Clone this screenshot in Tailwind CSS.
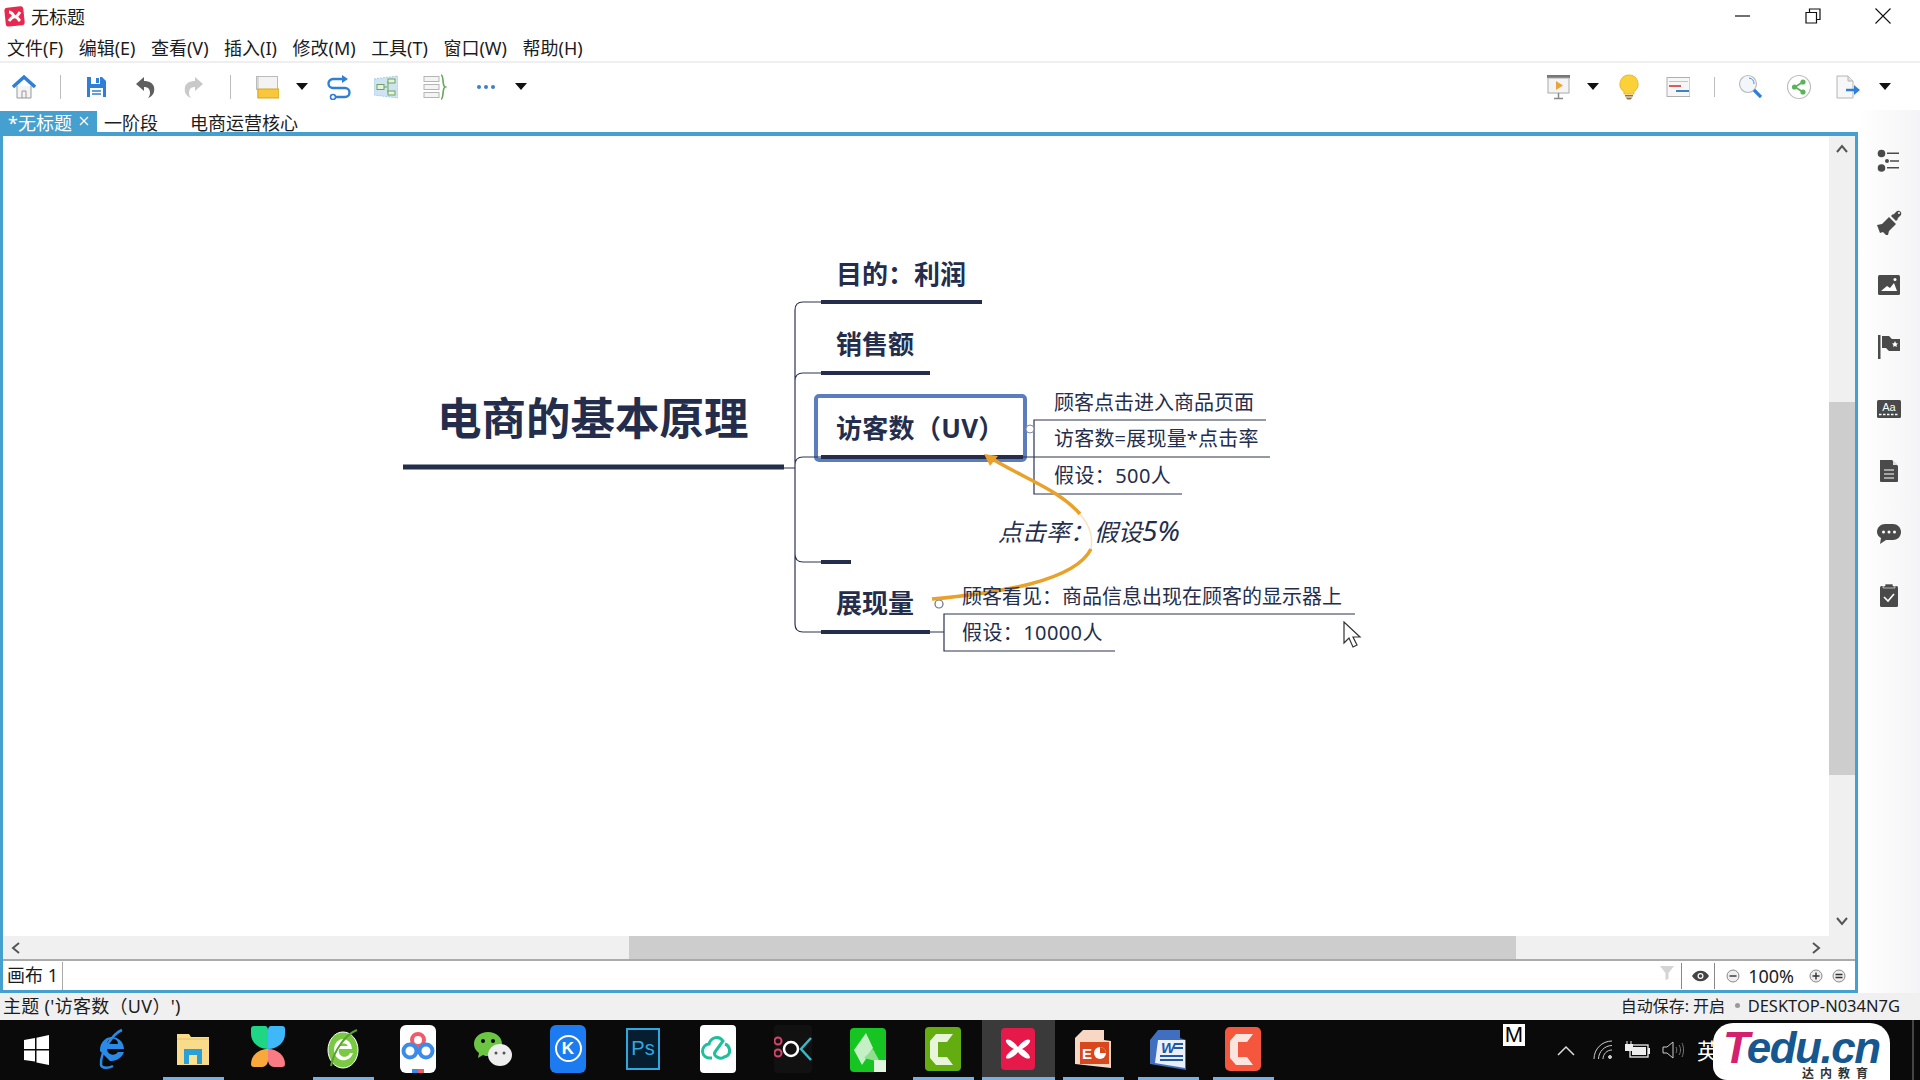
<!DOCTYPE html>
<html lang="zh-CN">

<head>
    <meta charset="UTF-8">
    <script src="https://cdn.jsdelivr.net/npm/@tailwindcss/browser@4"></script>
    <title>无标题</title>
</head>

<body class="m-0 overflow-hidden bg-white">
    <div class="w-[1920px] h-[1080px] flex flex-col overflow-hidden text-[18px] text-[#1c1c1c] font-['Noto_Sans','Noto_Sans_CJK_SC',sans-serif]">

        <!-- title bar -->
        <div class="h-[35px] flex items-start shrink-0">
            <svg class="mt-[6px] ml-[4px]" width="21" height="21" viewBox="0 0 21 21"><rect x="1" y="1" width="19" height="19" rx="3" fill="#e8294f" transform="rotate(-6 10 10)"/><path d="M5 6c3 0 4 3 5.500 4.500S14 9 16 6M5 15c2-3 3-4 5.500-4.500S14 13 16 15" fill="none" stroke="#fff" stroke-width="3"/></svg>
            <span class="ml-[6px] mt-[4px] leading-[26px]">无标题</span>
            <div class="ml-auto flex items-center h-[32px]">
                <svg class="mr-[54px]" width="16" height="16" viewBox="0 0 16 16"><path d="M0 8h15" stroke="#111" stroke-width="1.200"/></svg>
                <svg class="mr-[54px]" width="16" height="16" viewBox="0 0 16 16"><path d="M1 4.500h10.500V15H1zM4.500 4.500V1H15v10.500h-3.500" fill="none" stroke="#111" stroke-width="1.200"/></svg>
                <svg class="mr-[29px]" width="16" height="16" viewBox="0 0 16 16"><path d="M.5.5l15 15M15.500.5l-15 15" stroke="#111" stroke-width="1.100"/></svg>
            </div>
        </div>

        <!-- menu -->
        <div class="h-[26px] flex items-center shrink-0 pl-[7px] gap-[15.500px] leading-[26px]">
            <span>文件(F)</span><span>编辑(E)</span><span>查看(V)</span><span>插入(I)</span><span>修改(M)</span><span>工具(T)</span><span>窗口(W)</span><span>帮助(H)</span>
        </div>
        <div class="h-[2px] bg-[#efefef] shrink-0"></div>

        <!-- toolbar -->
        <div class="h-[47px] flex items-center shrink-0 pl-[12px] pr-[29px]">
            <svg width="24" height="26" viewBox="0 0 24 26"><path d="M5 12v12h14V12" fill="#f4f4f4" stroke="#999"/><path d="M10 24v-7h4v7" fill="none" stroke="#999"/><path d="M1 13L12 3l11 10" fill="none" stroke="#2f7fd6" stroke-width="3.500"/></svg>
            <div class="ml-[24px] w-px h-[24px] bg-[#bdbdbd]"></div>
            <svg class="ml-[23px]" width="24" height="26" viewBox="0 0 24 26"><path d="M3 3h15l4 4v16H3z" fill="#2f7fd6"/><rect x="7" y="3" width="9" height="7" fill="#fff"/><rect x="12" y="4" width="3" height="5" fill="#2f7fd6"/><rect x="6" y="14" width="13" height="9" fill="#fff"/><path d="M8 17h9M8 20h9" stroke="#2f7fd6" stroke-width="1.500"/></svg>
            <svg class="ml-[25px]" width="24" height="26" viewBox="0 0 24 26"><path d="M11 3L3 10l8 7v-4c4 0 6 2 6 6 0 2-1 4-2 5 5-2 7-6 6-11-1-4-5-6-10-6z" fill="#5f5f5f"/></svg>
            <svg class="ml-[25px]" width="24" height="26" viewBox="0 0 24 26"><path d="M13 3l8 7-8 7v-4c-4 0-6 2-6 6 0 2 1 4 2 5-5-2-7-6-6-11 1-4 5-6 10-6z" fill="#c9c9c9"/></svg>
            <div class="ml-[24px] w-px h-[24px] bg-[#bdbdbd]"></div>
            <svg class="ml-[24px]" width="24" height="26" viewBox="0 0 24 26"><rect x="1.500" y="2.500" width="21" height="13" fill="#f3f3f3" stroke="#bbb"/><path d="M3 2.500V24" stroke="#bbb"/><rect x="3" y="15" width="21" height="9" fill="#f8c83a" stroke="#d9a520"/></svg>
            <div class="ml-[17px] w-0 h-0 border-x-[6px] border-x-transparent border-t-[7px] border-t-[#111]"></div>
            <svg class="ml-[19px]" width="24" height="26" viewBox="0 0 24 26"><path d="M17 5H6a4.500 4.500 0 0 0 0 9h12a4.500 4.500 0 0 1 0 9H8" fill="none" stroke="#2f7fd6" stroke-width="2.400"/><path d="M15 1l6 4-6 4z" fill="#2f7fd6"/><circle cx="6" cy="23" r="2.500" fill="#fff" stroke="#2f7fd6" stroke-width="1.600"/></svg>
            <svg class="ml-[23px]" width="24" height="26" viewBox="0 0 24 26"><path d="M0 5l24-3v22L0 21z" fill="#cfe3f3" stroke="#a9cbe4" stroke-dasharray="2 1"/><path d="M10 13h3M14 7v12" stroke="#6da35f"/><rect x="3" y="10.500" width="7" height="5" fill="#e6f2dc" stroke="#6da35f"/><rect x="14" y="5" width="7" height="4" fill="#e6f2dc" stroke="#6da35f"/><rect x="14" y="17" width="7" height="4" fill="#e6f2dc" stroke="#6da35f"/></svg>
            <svg class="ml-[25px]" width="24" height="26" viewBox="0 0 24 26"><rect x="1" y="2.500" width="15" height="5" fill="#f4f4f4" stroke="#b5b5b5"/><rect x="1" y="10.500" width="15" height="5" fill="#f4f4f4" stroke="#b5b5b5"/><rect x="1" y="18.500" width="15" height="5" fill="#f4f4f4" stroke="#b5b5b5"/><path d="M18 1c3 0 1 11 4 12-3 1-1 12-4 12" fill="none" stroke="#68a45c" stroke-width="1.600"/></svg>
            <svg class="ml-[27px]" width="24" height="26" viewBox="0 0 24 26"><circle cx="5" cy="13" r="2" fill="#3f7fc4"/><circle cx="12" cy="13" r="2" fill="#3f7fc4"/><circle cx="19" cy="13" r="2" fill="#3f7fc4"/></svg>
            <div class="ml-[17px] w-0 h-0 border-x-[6px] border-x-transparent border-t-[7px] border-t-[#111]"></div>

            <svg class="ml-auto" width="24" height="26" viewBox="0 0 24 26"><rect x="1" y="1" width="23" height="3" fill="#777"/><rect x="2" y="4" width="21" height="15" fill="#f4f4f4" stroke="#aaa"/><path d="M10 7l7 4.500-7 4.500z" fill="#eda33a"/><path d="M12.500 19v5M8 24.500h9" stroke="#888" stroke-width="1.500"/></svg>
            <div class="ml-[17px] w-0 h-0 border-x-[6px] border-x-transparent border-t-[7px] border-t-[#111]"></div>
            <svg class="ml-[18px]" width="24" height="26" viewBox="0 0 24 26"><path d="M12 1a9 9 0 0 0-5 16.500V20h10v-2.500A9 9 0 0 0 12 1z" fill="#fbd13a" stroke="#eeb52e"/><path d="M8 21h8v1.500H8zM8.500 23.500h7L13.500 25.500h-3z" fill="#8c7440"/></svg>
            <svg class="ml-[25px]" width="24" height="26" viewBox="0 0 24 26"><rect x="1" y="3.500" width="23" height="19" fill="#f6f6f6" stroke="#b0b0b0"/><path d="M3 7.500h19" stroke="#c4c4c4"/><path d="M3 12h12" stroke="#dc5a5a" stroke-width="2"/><path d="M10 17h13" stroke="#3e82c4" stroke-width="2"/></svg>
            <div class="ml-[24px] w-px h-[20px] bg-[#bdbdbd]"></div>
            <svg class="ml-[23px]" width="24" height="26" viewBox="0 0 24 26"><circle cx="10" cy="10" r="8.500" fill="#f2f6fb" stroke="#bbb" stroke-width="1.200"/><path d="M11 4a6 6 0 0 1 5 6" fill="none" stroke="#4a90d9"/><path d="M16 16l7 7" stroke="#2f7fd6" stroke-width="3.200"/></svg>
            <svg class="ml-[25px]" width="24" height="26" viewBox="0 0 24 26"><circle cx="12" cy="13" r="11.500" fill="#fff" stroke="#bdbdbd" stroke-width="1.200"/><path d="M16 8l-8 5 8 5" fill="none" stroke="#5cb35c" stroke-width="1.800"/><circle cx="16" cy="8" r="2.600" fill="#5cb35c"/><circle cx="7.500" cy="13" r="2.600" fill="#5cb35c"/><circle cx="16" cy="18" r="2.600" fill="#5cb35c"/></svg>
            <svg class="ml-[25px]" width="24" height="26" viewBox="0 0 24 26"><path d="M1 2h11l5 5v17H1z" fill="#f7f7f7" stroke="#b5b5b5"/><path d="M12 2v5h5" fill="#e4e4e4" stroke="#b5b5b5"/><path d="M10 16h9" stroke="#2f7fd6" stroke-width="2.500"/><path d="M18 11l6 5-6 5z" fill="#2f7fd6"/></svg>
            <div class="ml-[19px] w-0 h-0 border-x-[6px] border-x-transparent border-t-[7px] border-t-[#111]"></div>
        </div>

        <!-- work area -->
        <div class="h-[883px] flex shrink-0">
            <div class="w-[1858px] flex flex-col">
                <div class="h-[22px] flex items-end shrink-0 leading-[21px]">
                    <div class="w-[97px] h-[21px] pt-[2px] bg-[#45a0d0] text-white pl-[8px] flex items-start">*无标题<svg class="ml-[7px] mt-[3px]" width="10" height="10" viewBox="0 0 10 10"><path d="M1 1l8 8M9 1l-8 8" stroke="#fff" stroke-width="1.300"/></svg></div>
                    <span class="ml-[7px] h-[21px] pt-[2px]">一阶段</span>
                    <span class="ml-[32px] h-[21px] pt-[2px]">电商运营核心</span>
                </div>
                <div class="flex-1 border-[3px] border-t-[4px] border-[#45a0d0] flex flex-col min-h-0 relative">
                    <div class="flex-1 flex min-h-0">
                        <div class="flex-1 relative overflow-hidden bg-white">
                            <!-- the mind map, in page coordinates -->
                            <div class="absolute left-[-3px] top-[-135px] w-[1920px] h-[1080px] text-[#242e4c]">
                                <div class="absolute left-[814px] top-[393px] w-[213px] h-[68px] border-[4px] border-[#5b7dbd] rounded-[5px]"></div>
                                <svg class="absolute left-0 top-0" width="1920" height="1080" fill="none">
                                    <path d="M403 466H784" stroke="#242e4c" stroke-width="5"/>
                                    <path d="M784 467H795M821 301H803Q795 301 795 309V623Q795 631 803 631H821M821 372H803Q795 372 795 380M821 456H803Q795 456 795 464M795 553Q795 561 803 561H821" stroke="#2b3350" stroke-width="1.200"/>
                                    <path d="M821 301H982M821 372H930M821 456H1023M821 561H851M821 631H930" stroke="#242e4c" stroke-width="4"/>
                                    <path d="M1266 419H1034V493H1182M1023 456H1270M930 631H944M1355 613H944V650H1115" stroke="#2b3350" stroke-width="1.200"/>
                                    <circle cx="1030" cy="428" r="4" fill="#fff" stroke="#7d8aa5"/>
                                    <circle cx="939" cy="603" r="4" fill="#fff" stroke="#66708a" stroke-width="1.200"/>
                                    <path d="M932 598C1000 592 1075 580 1091 548M1080 513C1060 490 1030 480 994 459" stroke="#e9a12a" stroke-width="3.500"/>
                                    <path d="M1091 548C1093 535 1090 525 1080 513" stroke="#f8e3bf" stroke-width="1.500"/>
                                    <path d="M984 453L998 455L990 465Z" fill="#e9a12a"/>
                                </svg>
                                <div class="absolute left-[437px] top-[387px] text-[44.500px] leading-[60px] font-bold whitespace-nowrap">电商的基本原理</div>
                                <div class="absolute left-[836px] top-[255px] text-[26px] leading-[36px] font-bold whitespace-nowrap">目的：利润</div>
                                <div class="absolute left-[836px] top-[325px] text-[26px] leading-[36px] font-bold whitespace-nowrap">销售额</div>
                                <div class="absolute left-[836px] top-[409px] text-[26px] leading-[36px] font-bold tracking-[0.3px] whitespace-nowrap">访客数（UV）</div>
                                <div class="absolute left-[836px] top-[584px] text-[26px] leading-[36px] font-bold whitespace-nowrap">展现量</div>
                                <div class="absolute left-[1054px] top-[388px] text-[20px] leading-[28px] whitespace-nowrap">顾客点击进入商品页面</div>
                                <div class="absolute left-[1054px] top-[424px] text-[20px] leading-[28px] tracking-[0.2px] whitespace-nowrap">访客数=展现量*点击率</div>
                                <div class="absolute left-[1054px] top-[461px] text-[20px] leading-[28px] tracking-[0.4px] whitespace-nowrap">假设：500人</div>
                                <div class="absolute left-[962px] top-[582px] text-[20px] leading-[28px] whitespace-nowrap">顾客看见：商品信息出现在顾客的显示器上</div>
                                <div class="absolute left-[962px] top-[618px] text-[20px] leading-[28px] tracking-[0.4px] whitespace-nowrap">假设：10000人</div>
                                <div class="absolute left-[998px] top-[512px] text-[24px] leading-[34px] italic whitespace-nowrap">点击率：假设<span class="text-[28px]">5%</span></div>
                                <svg class="absolute left-[1342px] top-[620px]" width="22" height="28" viewBox="0 0 22 28"><path d="M2 1v21l5-5 4 9 4-2-4-8h7z" fill="#fff" stroke="#333" stroke-width="1.200"/></svg>
                            </div>
                        </div>
                        <!-- vertical scrollbar -->
                        <div class="w-[26px] bg-[#f0f0f0] relative shrink-0">
                            <svg class="absolute left-[7px] top-[8px]" width="12" height="10" viewBox="0 0 12 10"><path d="M1 8l5-6 5 6" fill="none" stroke="#555" stroke-width="2"/></svg>
                            <div class="absolute left-0 top-[266px] w-full h-[373px] bg-[#cdcdcd]"></div>
                            <svg class="absolute left-[7px] bottom-[10px]" width="12" height="10" viewBox="0 0 12 10"><path d="M1 2l5 6 5-6" fill="none" stroke="#555" stroke-width="2"/></svg>
                        </div>
                    </div>
                    <!-- horizontal scrollbar -->
                    <div class="h-[23px] bg-[#f0f0f0] flex items-center relative shrink-0">
                        <svg class="ml-[8px]" width="10" height="12" viewBox="0 0 10 12"><path d="M8 1L2 6l6 5" fill="none" stroke="#555" stroke-width="2"/></svg>
                        <div class="absolute left-[626px] w-[887px] h-full bg-[#cdcdcd]"></div>
                        <svg class="absolute right-[34px]" width="10" height="12" viewBox="0 0 10 12"><path d="M2 1l6 5-6 5" fill="none" stroke="#555" stroke-width="2"/></svg>
                    </div>
                    <!-- sheet bar -->
                    <div class="h-[31px] border-t-2 border-[#aaaaaa] flex items-center shrink-0">
                        <span class="pl-[4px] pb-[2px] w-[60px] leading-[26px] border-r border-[#aaaaaa] whitespace-nowrap">画布 1</span>
                        <svg class="ml-auto mb-[6px]" width="16" height="16" viewBox="0 0 16 16"><path d="M1 1h14L9.500 8v6l-3 1V8z" fill="#d4d4d4"/></svg>
                        <div class="ml-[6px] w-px h-[26px] bg-[#888]"></div>
                        <svg class="ml-[10px]" width="17" height="12" viewBox="0 0 17 12"><path d="M0 6c4-7 13-7 17 0-4 7-13 7-17 0z" fill="#444"/><circle cx="8.500" cy="6" r="3" fill="#fff"/><circle cx="8.500" cy="6" r="1.800" fill="#444"/></svg>
                        <div class="ml-[5px] w-px h-[26px] bg-[#888]"></div>
                        <svg class="ml-[11px]" width="14" height="14" viewBox="0 0 14 14"><circle cx="7" cy="7" r="6" fill="#eee" stroke="#888"/><path d="M3.500 7h7" stroke="#333" stroke-width="1.400"/></svg>
                        <span class="ml-[8px] leading-[28px] text-[#222]">100%</span>
                        <svg class="ml-[15px]" width="14" height="14" viewBox="0 0 14 14"><circle cx="7" cy="7" r="6" fill="#eee" stroke="#888"/><path d="M3.500 7h7M7 3.500v7" stroke="#333" stroke-width="1.400"/></svg>
                        <svg class="ml-[9px] mr-[9px]" width="14" height="14" viewBox="0 0 14 14"><circle cx="7" cy="7" r="6" fill="#eee" stroke="#888"/><path d="M3.500 5.500h7M3.500 8.500h7" stroke="#333" stroke-width="1.400"/></svg>
                    </div>
                </div>
            </div>

            <!-- right panel -->
            <div class="w-[62px] pt-[20px] flex flex-col items-center bg-gradient-to-r from-white to-[#f4f4f6]">
                <div class="h-[62px] flex items-center"><svg width="24" height="24" viewBox="0 0 24 24" fill="#4a4a4a"><circle cx="4.500" cy="4.500" r="3.800"/><circle cx="4.500" cy="19" r="3.800"/><circle cx="10" cy="12" r="2"/><path d="M10 3.500h12v1.500H10zM13 11.200h9v1.500h-9zM10 18h12v1.500H10z"/></svg></div>
                <div class="h-[62px] flex items-center"><svg width="26" height="26" viewBox="0 0 26 26" fill="#4a4a4a"><path d="M1 15l5-1 7-7 7 7-7 7-1 4-2 0-3-3-3 1z"/><path d="M15 6l2-2 5 5-2 2z"/><path d="M17 5l4-4a3 3 0 0 1 4 4l-4 4z"/><circle cx="23" cy="3" r="1" fill="#fff"/></svg></div>
                <div class="h-[62px] flex items-center"><svg width="24" height="24" viewBox="0 0 24 24"><rect x="1" y="2" width="22" height="20" rx="1.500" fill="#4a4a4a"/><path d="M4 18l6-5 3 2 4-5 3 8z" fill="#fff"/><circle cx="18" cy="6.500" r="1.500" fill="#fff"/></svg></div>
                <div class="h-[62px] flex items-center"><svg width="24" height="24" viewBox="0 0 24 24" fill="#4a4a4a"><rect x="1" y="0" width="2.500" height="24"/><path d="M5 1h7l3 3h8v12H12l-3-3H5z"/><path d="M18 6l1 2.200 2 .2-1.500 1.500.4 2.100-1.900-1-1.900 1 .4-2.100L15 8.400l2-.2z" fill="#fff"/></svg></div>
                <div class="h-[62px] flex items-center"><svg width="24" height="18" viewBox="0 0 24 18"><rect width="24" height="18" rx="1.500" fill="#4a4a4a"/><text x="12" y="11" text-anchor="middle" font-family="Liberation Sans" font-size="11" fill="#fff">Aa</text><path d="M2 14.500h20" stroke="#fff" stroke-width="1.300" stroke-dasharray="2.500 1.500"/></svg></div>
                <div class="h-[62px] flex items-center"><svg width="24" height="24" viewBox="0 0 24 24"><path d="M3 1h12l6 6v15a1 1 0 0 1-1 1H4a1 1 0 0 1-1-1z" fill="#4a4a4a"/><path d="M16 1l5 5h-5z" fill="#ddd"/><path d="M7 11h10M7 15h10M7 19h10" stroke="#fff" stroke-width="1.200"/></svg></div>
                <div class="h-[62px] flex items-center"><svg width="24" height="24" viewBox="0 0 24 24"><path d="M8 3h8c4 0 8 3 8 8s-4 8-8 8H9l-6 4 1-6c-2-1-4-3-4-6 0-5 4-8 8-8z" fill="#4a4a4a"/><circle cx="6.500" cy="11" r="1.500" fill="#fff"/><circle cx="12" cy="11" r="1.500" fill="#fff"/><circle cx="17.500" cy="11" r="1.500" fill="#fff"/></svg></div>
                <div class="h-[62px] flex items-center"><svg width="24" height="24" viewBox="0 0 24 24"><rect x="3" y="3" width="18" height="21" rx="1.500" fill="#4a4a4a"/><path d="M8 3V1h8v2h2v2H6V3z" fill="#4a4a4a" stroke="#fff" stroke-width=".6"/><path d="M7 14l4 4 6-7" fill="none" stroke="#fff" stroke-width="1.600"/></svg></div>
            </div>
        </div>

        <!-- status bar -->
        <div class="h-[27px] bg-[#f0f0f0] flex items-center shrink-0 pl-[3px] pr-[20px] pb-[2px] leading-[24px]">
            <span class="tracking-[0.3px]">主题 ('访客数（UV）')</span>
            <span class="ml-auto text-[16px]">自动保存: 开启</span>
            <span class="ml-[10px] w-[5px] h-[5px] rounded-full bg-[#999]"></span>
            <span class="ml-[7.500px] text-[16.500px]">DESKTOP-N034N7G</span>
        </div>

        <!-- taskbar -->
        <div class="h-[60px] bg-[#0a0a0a] flex shrink-0 relative">
            <div class="w-[72px] flex items-center justify-center">
                <svg width="25" height="32" viewBox="0 0 25 32" fill="#fff"><path d="M0 6l11-2v11H0zM12.500 3.800L25 1v14H12.500zM0 16.500h11v11L0 26zM12.500 16.500H25V31l-12.500-2.500z"/></svg>
            </div>
            <div class="w-[83.500px] pr-[4px] flex items-center justify-center">
                <svg width="32" height="46" viewBox="0 0 32 46"><path d="M4 24a12 13 0 1 1 24-2H11a6 6 0 0 0 11 3h6c-3 8-10 9-14 9" fill="#2b8ae6"/><path d="M11 17h11a5 5 0 0 0-11 0z" fill="#0a0a0a"/><path d="M26 3C18 6 4 24 5 38c1 4 8 3 12 1" fill="none" stroke="#2b8ae6" stroke-width="2.500"/></svg>
            </div>

            <!-- pinned apps, 75px apart -->
            <div class="w-[75px] flex flex-col items-center">
                <div class="flex-1 flex items-center"><svg width="34" height="36" viewBox="0 0 34 36"><path d="M1 3h12l2 3h18v28H1z" fill="#f9dc8b"/><path d="M1 8h32" stroke="#e8be5f"/><path d="M8 33V18h18v15h-5v-9h-8v9z" fill="#2a9fd8"/><rect x="13" y="24" width="8" height="9" fill="#fbe28f"/></svg></div>
                <div class="w-[61px] h-[3px] bg-[#7ab0e0]"></div>
            </div>
            <div class="w-[75px] flex items-center justify-center pb-[3px]">
                <svg width="36" height="48" viewBox="0 0 36 48"><path d="M1 4a3 3 0 0 1 3-3h11c2 0 3 2 3 4v19C8 24 1 17 1 9z" fill="#1fd685"/><path d="M35 4a3 3 0 0 0-3-3H21c-2 0-3 2-3 4v19c10 0 17-7 17-15z" fill="#3fb8fa"/><path d="M1 39a3 3 0 0 0 3 3h8c4 0 6-4 6-7V24C8 24 1 31 1 39z" fill="#f9a93c"/><path d="M35 39a3 3 0 0 1-3 3h-8c-4 0-6-4-6-7V24c10 0 17 7 17 15z" fill="#fb7b85"/></svg>
            </div>
            <div class="w-[75px] flex flex-col items-center">
                <div class="flex-1 flex items-center"><svg width="34" height="46" viewBox="0 0 34 46"><ellipse cx="17" cy="24" rx="15" ry="18" fill="#7ac943" stroke="#fff"/><path d="M8 23a9 10 0 1 1 18 0H13a5 5 0 0 0 11 4h3c-2 6-7 8-12 7-5-2-7-6-7-11z" fill="#fff"/><path d="M13 20h9a5 5 0 0 0-9 0z" fill="#7ac943"/><path d="M31 4C20 8 8 24 5 40" fill="none" stroke="#5aa02c" stroke-width="2"/></svg></div>
                <div class="w-[61px] h-[3px] bg-[#7ab0e0]"></div>
            </div>
            <div class="w-[75px] flex items-center justify-center pb-[3px]">
                <svg width="36" height="48" viewBox="0 0 36 48"><rect width="36" height="48" rx="6" fill="#fff"/><circle cx="18" cy="15" r="6" fill="none" stroke="#f25a6a" stroke-width="4"/><circle cx="10" cy="26" r="6.500" fill="none" stroke="#3b8be8" stroke-width="4"/><circle cx="26" cy="26" r="6.500" fill="none" stroke="#3b8be8" stroke-width="4"/><rect x="12" y="44" width="6" height="4" fill="#3b8be8"/><rect x="18" y="44" width="6" height="4" fill="#f25a6a"/></svg>
            </div>
            <div class="w-[75px] flex items-center justify-center pb-[3px]">
                <svg width="38" height="38" viewBox="0 0 38 38"><path d="M14 2C6 2 0 7 0 14c0 4 2 7 5 9l-1 5 5-3c2 1 3 1 5 1 8 0 14-5 14-12S22 2 14 2z" fill="#6cc644"/><circle cx="9" cy="11" r="2" fill="#0a0a0a"/><circle cx="19" cy="11" r="2" fill="#0a0a0a"/><ellipse cx="26" cy="25" rx="12" ry="11" fill="#eee"/><circle cx="22" cy="23" r="1.500" fill="#555"/><circle cx="30" cy="23" r="1.500" fill="#555"/></svg>
            </div>
            <div class="w-[75px] flex items-center justify-center pb-[3px]">
                <div class="w-[36px] h-[48px] rounded-[6px] bg-[#1c7bf0] flex items-center justify-center"><div class="w-[27px] h-[27px] rounded-full border-2 border-white text-white text-[17px] leading-[23px] font-bold text-center font-['Liberation_Sans',sans-serif]">K</div></div>
            </div>
            <div class="w-[75px] flex items-center justify-center pb-[3px]">
                <div class="w-[34px] h-[42px] bg-[#061e30] border-2 border-[#2fa8e0] text-[#2fa8e0] text-[20px] leading-[36px] text-center font-['Liberation_Sans',sans-serif]">Ps</div>
            </div>
            <div class="w-[75px] flex items-center justify-center pb-[3px]">
                <svg width="36" height="48" viewBox="0 0 36 48"><rect width="36" height="48" rx="4" fill="#fff"/><path d="M12 33H10a7 7 0 0 1-1-14c2-7 10-9 14-3l-8 11c-3 4 6 8 9 5l3-1a7 7 0 0 0-2-12" fill="none" stroke="#1ebf9a" stroke-width="3"/></svg>
            </div>
            <div class="w-[75px] flex items-center justify-center pb-[3px]">
                <svg width="38" height="48" viewBox="0 0 38 48"><rect width="38" height="48" rx="4" fill="#111"/><circle cx="4" cy="16" r="3.500" fill="none" stroke="#d9446f" stroke-width="2"/><circle cx="4" cy="28" r="3.500" fill="none" stroke="#d9446f" stroke-width="2"/><circle cx="17" cy="24" r="7" fill="none" stroke="#fff" stroke-width="2.500"/><path d="M37 13L27 24l10 11" fill="none" stroke="#3ab8c8" stroke-width="2.500"/></svg>
            </div>
            <div class="w-[75px] flex flex-col items-center">
                <div class="flex-1 flex items-center"><svg width="36" height="44" viewBox="0 0 36 44"><rect width="36" height="44" rx="4" fill="#16c422"/><path d="M4 22L16 5l7 15-11 17z" fill="#c5f0c5"/><path d="M14 30l9-9 7 13z" fill="#8fdf8f"/><rect x="24" y="32" width="12" height="12" fill="#dff6df"/></svg></div>
            </div>
            <div class="w-[75px] flex flex-col items-center">
                <div class="flex-1 flex items-center"><svg width="36" height="44" viewBox="0 0 36 44"><rect width="36" height="44" rx="4" fill="#63ad10"/><path d="M28 7H11L5 14v17l6 7h17l-6-8H13V15h9z" fill="#e8f5da"/></svg></div>
                <div class="w-[61px] h-[3px] bg-[#7ab0e0]"></div>
            </div>
            <div class="w-[75px] flex flex-col items-center">
                <div class="flex-1 w-[73px] bg-[#3a3a3a] flex items-center justify-center"><svg width="34" height="42" viewBox="0 0 34 42"><rect width="34" height="42" rx="4" fill="#e5194a"/><path d="M5 12c3-2 8 2 12 7 4-5 9-9 12-7 1 3-4 7-8 9 4 2 8 6 8 9-3 2-9-2-12-6-3 4-9 8-12 6 0-3 4-7 8-9-4-2-9-6-8-9z" fill="#fff"/></svg></div>
                <div class="w-[73px] h-[3px] bg-[#7ab0e0]"></div>
            </div>
            <div class="w-[75px] flex flex-col items-center">
                <div class="flex-1 flex items-center"><svg width="36" height="42" viewBox="0 0 36 42"><path d="M8 2h21v10l7 1v27L0 36V10z" fill="#f8d8c4"/><rect x="5" y="14" width="29" height="22" fill="#d9471c"/><text x="7" y="31" font-family="Liberation Sans" font-weight="700" font-size="15" fill="#fff">E</text><circle cx="25" cy="25" r="6" fill="#fff"/><path d="M25 25V19a6 6 0 0 1 6 6z" fill="#d9471c"/></svg></div>
                <div class="w-[61px] h-[3px] bg-[#7ab0e0]"></div>
            </div>
            <div class="w-[75px] flex flex-col items-center">
                <div class="flex-1 flex items-center"><svg width="36" height="42" viewBox="0 0 36 42"><path d="M8 2h22v8l6 2v30L0 36V12z" fill="#3f6fbe"/><path d="M8 12h27v28L5 35z" fill="#eaf0fa"/><text x="11" y="25" font-family="Liberation Sans" font-style="italic" font-weight="700" font-size="15" fill="#2456a8">W</text><path d="M24 16h9M24 20h9M10 28h23M10 32h23" stroke="#2456a8" stroke-width="2"/></svg></div>
                <div class="w-[61px] h-[3px] bg-[#7ab0e0]"></div>
            </div>
            <div class="w-[75px] flex flex-col items-center">
                <div class="flex-1 flex items-center"><svg width="36" height="44" viewBox="0 0 36 44"><rect width="36" height="44" rx="5" fill="#f4573d"/><path d="M28 7H11L5 14v17l6 7h17l-6-8H13V15h9z" fill="#fbe6df"/></svg></div>
                <div class="w-[61px] h-[3px] bg-[#7ab0e0]"></div>
            </div>

            <!-- tray -->
            <div class="absolute left-[1503px] top-[4px] w-[22px] h-[22px] bg-white text-black text-[22px] leading-[22px] text-center font-['Liberation_Sans',sans-serif]">M</div>
            <svg class="absolute left-[1557px] top-[25px]" width="18" height="12" viewBox="0 0 18 12"><path d="M1 10l8-8 8 8" fill="none" stroke="#ddd" stroke-width="1.500"/></svg>
            <svg class="absolute left-[1593px] top-[20px]" width="20" height="20" viewBox="0 0 20 20" fill="none" stroke="#ccc"><path d="M1 19C1 9 9 1 19 1M5.500 19c0-7 6-13.500 13.500-13.500M10 19c0-5 4-9 9-9"/><circle cx="17" cy="17" r="1.500" fill="#ccc"/></svg>
            <svg class="absolute left-[1625px] top-[20px]" width="26" height="20" viewBox="0 0 26 20"><rect x="5" y="5" width="18" height="12" fill="none" stroke="#eee" stroke-width="1.300"/><rect x="7" y="7" width="14" height="8" fill="#eee"/><rect x="23" y="8" width="2" height="6" fill="#eee"/><rect x="0" y="4" width="8" height="7" fill="#eee"/><path d="M2 1v3M6 1v3" stroke="#eee"/></svg>
            <svg class="absolute left-[1662px] top-[21px]" width="22" height="18" viewBox="0 0 22 18" fill="none" stroke="#ccc"><path d="M1 6h4l6-5v16l-6-5H1z"/><path d="M14 6c1 2 1 4 0 6M17 4c2 3 2 7 0 10M20 2c2 4 2 10 0 14" stroke="#777"/></svg>
            <div class="absolute left-[1697px] top-[14px] text-[22px] leading-[32px] text-white">英</div>

            <!-- watermark -->
            <div class="absolute left-[1713px] top-[3px] w-[177px] h-[57px] bg-white rounded-tl-[20px] rounded-tr-[20px] rounded-bl-[14px]">
                <div class="pl-[10px] pt-[5px] text-[44px] leading-[40px] font-bold italic tracking-[-1.500px] whitespace-nowrap font-['Liberation_Sans',sans-serif]"><span class="text-[#d3206f]">T</span><span class="text-[#16578f]">edu.cn</span></div>
                <div class="pl-[89px] text-[12px] leading-[12px] font-bold tracking-[6px] text-[#333] whitespace-nowrap">达内教育</div>
            </div>
            <div class="absolute left-[1912px] top-0 w-[2px] h-full bg-[#444]"></div>
        </div>
    </div>
</body>

</html>
